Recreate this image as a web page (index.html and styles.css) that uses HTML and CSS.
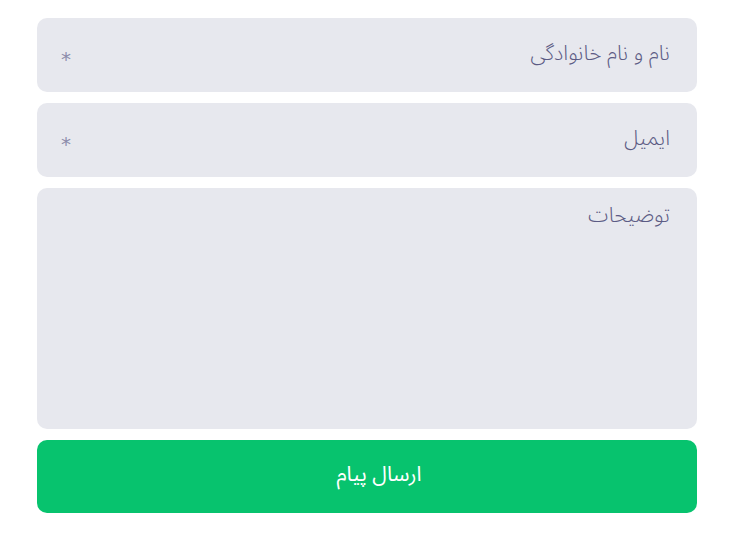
FILE: index.html
```html
<!DOCTYPE html>
<html lang="fa" dir="rtl">
<head>
<meta charset="utf-8">
<link rel="stylesheet" href="styles.css">
</head>
<body>
<form class="form">
  <div class="field">
    <input class="input" type="text" placeholder="نام و نام خانوادگی">
    <span class="req">*</span>
  </div>
  <div class="field">
    <input class="input" type="email" placeholder="ایمیل">
    <span class="req">*</span>
  </div>
  <div class="field area">
    <textarea class="textarea" placeholder="توضیحات"></textarea>
  </div>
  <button class="submit" type="button">ارسال پیام</button>
</form>
</body>
</html>
```
FILE: styles.css
```css
html, body {
  margin: 0;
  padding: 0;
  background: #ffffff;
}
body {
  font-family: "Noto Sans Arabic", "DejaVu Sans", "Noto Sans", sans-serif;
}
.form {
  display: flex;
  flex-direction: column;
  gap: 11px;
  margin: 18px 42px 0 37px;
}
.field {
  display: flex;
  align-items: center;
  height: 74px;
  background: #e7e8ee;
  border-radius: 10px;
  padding: 0 27px 0 24px;
  box-sizing: border-box;
}
.input {
  flex: 1;
  min-width: 0;
  border: 0;
  background: transparent;
  outline: none;
  font-family: inherit;
  font-size: 21px;
  font-weight: 300;
  color: #5c5b84;
  padding: 0;
  margin-top: -4px;
}
.input::placeholder, .textarea::placeholder {
  color: #5c5b84;
  opacity: 1;
}
.req {
  color: #8c8cab;
  font-size: 20px;
  margin-top: 8px;
  font-family: "DejaVu Sans", sans-serif;
}
.area {
  height: 241px;
  align-items: stretch;
  padding: 5px 27px 14px 24px;
}
.textarea {
  flex: 1;
  border: 0;
  background: transparent;
  outline: none;
  resize: none;
  font-family: inherit;
  font-size: 21px;
  font-weight: 300;
  color: #5c5b84;
  padding: 0;
}
.submit {
  height: 73px;
  border: 0;
  border-radius: 10px;
  background: #07c36e;
  color: #ffffff;
  font-family: inherit;
  font-size: 21px;
  font-weight: 400;
  padding: 0 0 6px 24px;
  cursor: pointer;
}
```
